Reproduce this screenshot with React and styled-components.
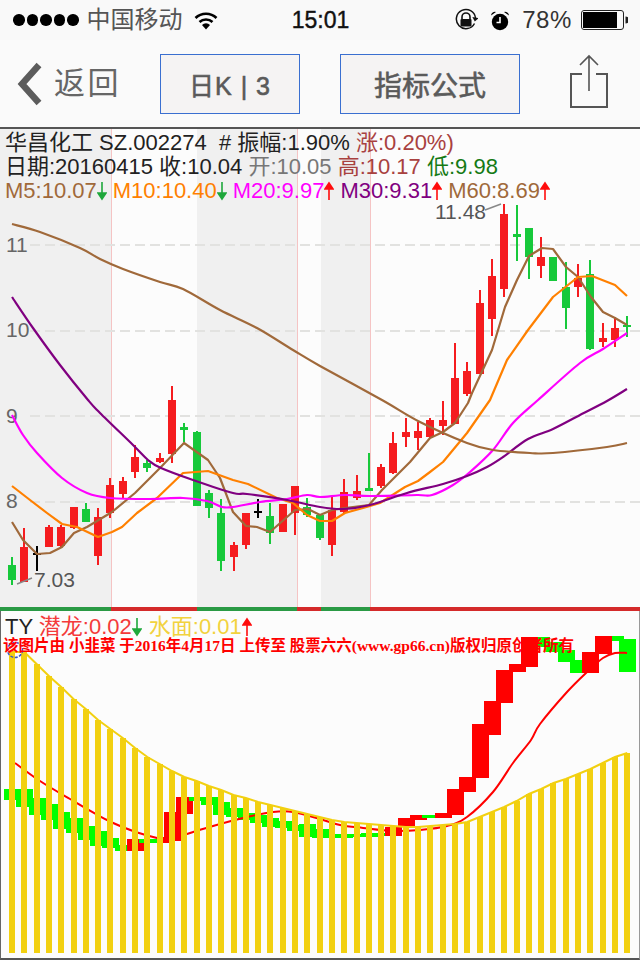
import React from 'react';
import styled, { createGlobalStyle } from 'styled-components';

const GlobalStyle = createGlobalStyle`
  html, body {
    margin: 0;
    padding: 0;
    background: #fcfcfc;
  }
`

// one candle: [top of wick, top of body, bottom of body, bottom of wick, colour]
const R = '#f51c1f';
const G = '#17c93b';
const K = '#000000';
const CANDLES = [
  [557, 565, 580, 585, G], [528, 547, 582, 582, R], [546, 553, 555, 571, K], [525, 527, 547, 547, R],
  [525, 527, 546, 547, R], [507, 507, 528, 529, R], [503, 509, 522, 522, G], [508, 517, 556, 565, R],
  [478, 485, 513, 518, R], [477, 481, 494, 498, R], [445, 457, 472, 478, R], [460, 463, 468, 472, G],
  [453, 458, 462, 463, R], [386, 400, 454, 463, R], [423, 427, 430, 442, G], [431, 432, 506, 506, G],
  [490, 493, 508, 518, G], [499, 513, 561, 571, G], [542, 545, 557, 571, R], [513, 513, 545, 549, R],
  [499, 511, 513, 518, K], [503, 516, 533, 544, G], [504, 504, 532, 532, R], [486, 486, 513, 535, R],
  [498, 507, 515, 517, G], [515, 515, 538, 540, G], [497, 510, 545, 556, R], [479, 492, 512, 513, R],
  [475, 491, 498, 500, R], [453, 488, 491, 491, G], [464, 467, 486, 488, R], [432, 443, 473, 474, R],
  [418, 432, 437, 447, R], [422, 431, 438, 450, R], [418, 420, 437, 438, R], [401, 420, 426, 435, R],
  [343, 378, 424, 424, R], [362, 371, 394, 396, R], [290, 303, 374, 374, R], [259, 276, 319, 336, R],
  [204, 214, 289, 297, R], [205, 234, 237, 261, G], [228, 228, 257, 279, G], [237, 257, 266, 278, R],
  [257, 257, 281, 281, G], [262, 287, 308, 329, G], [264, 278, 287, 297, R], [260, 274, 349, 350, G],
  [323, 338, 342, 347, R], [317, 328, 340, 347, R], [316, 325, 327, 337, G],
];

const MA_LINES = [
  {
    color: '#a0693a',
    smooth: false,
    points: '12,522 23,540 37,554 50,553 62,547 74,533 87,527 112,512 135,493 160,468 184,443 208,460 220,478 233,512 246,526 257,527 270,532 295,510 308,509 320,515 332,510 345,508 369,505 382,490 410,462 430,438 443,432 455,423 468,403 472,393 492,350 505,307 517,280 529,256 542,248 553,249 566,267 578,277 591,297 603,312 615,318 627,325',
  },
  {
    color: '#ff8000',
    smooth: false,
    points: '12,486 30,500 47,513 62,524 77,527 98,537 112,532 122,527 137,513 157,498 183,473 208,471 233,480 248,484 277,498 293,503 307,515 320,521 332,521 345,513 370,506 380,503 405,487 418,481 430,472 443,462 467,433 490,400 507,360 528,330 553,297 578,277 592,276 615,285 627,296',
  },
  {
    color: '#ff00ff',
    smooth: true,
    points: '12,415 23,435 37,453 62,478 87,493 110,498 150,499 183,498 207,501 222,507 233,507 260,502 287,499 307,495 320,497 345,495 370,496 417,495 432,495 453,485 470,472 493,450 513,423 538,400 580,363 603,349 627,333',
  },
  {
    color: '#800080',
    smooth: true,
    points: '12,297 33,328 60,365 88,400 100,413 133,445 148,460 161,468 193,480 233,493 247,494 287,500 320,507 343,509 370,505 407,493 443,484 467,476 487,467 503,457 528,439 553,429 580,415 607,401 627,389',
  },
  {
    color: '#a0693a',
    smooth: true,
    points: '12,224 40,232 80,248 100,259 123,269 160,282 183,289 220,310 257,328 293,350 320,366 382,400 420,422 467,443 493,450 530,453 553,453 607,447 627,443',
  },
];

// the trend of the period, drawn as shading in the chart and as the strip under it
const TRENDS = [
  { width: 111, up: false },
  { width: 86, up: true },
  { width: 100, up: false },
  { width: 24, up: true },
  { width: 49, up: false },
  { width: 270, up: true },
];

const GRID_LINES = [245, 331, 416, 502];
const AXIS_LABELS = [['11', 252], ['10', 337], ['9', 423], ['8', 508]];

const BAR_TOPS = [
  652, 652, 664, 676, 687, 699, 709, 720, 729, 738, 748, 757, 764, 771, 777, 781, 786, 790, 795, 798,
  802, 805, 808, 811, 814, 817, 820, 822, 823, 824, 825, 826, 827, 827, 826, 825, 824, 822, 817, 812,
  807, 801, 794, 789, 783, 779, 774, 769, 763, 757, 753,
];

const BG = '#00ff00';
const BR = '#ff0000';
// index on the time axis, top, bottom, colour
const BOXES = [
  [0, 789, 800, BG], [1, 789, 807, BG], [2, 798, 815, BG], [3, 804, 820, BG], [4, 812, 829, BG],
  [5, 818, 833, BG], [6, 826, 840, BG], [7, 831, 846, BG], [8, 838, 848, BG], [9, 845, 851, BG],
  [10, 839, 851, BR], [11, 839, 843, BG], [12, 839, 843, BG], [12.5, 837, 843, BR], [13, 812, 841, BR],
  [14, 797, 814, BR], [15, 797, 801, BG], [16, 797, 805, BG], [17, 802, 815, BG], [18, 808, 817, BG],
  [19, 813, 820, BG], [20, 815, 823, BG], [21, 818, 827, BG], [22, 821, 828, BG], [23, 825, 831, BG],
  [24, 824, 837, BG], [25, 829, 838, BG], [26, 834, 838, BG], [27, 834, 838, BG], [28, 834, 837, BG],
  [29, 833, 837, BG], [30, 833, 836, BG], [31, 827, 836, BR], [32, 818, 827, BR], [33, 815, 820, BR],
  [34, 815, 818, BG], [35, 813, 818, BR], [36, 789, 815, BR], [37, 777, 792, BR], [38, 724, 778, BR],
  [39, 701, 735, BR], [40, 670, 703, BR], [41, 664, 672, BR], [43, 637, 647, BG], [42, 637, 667, BR],
  [44, 642, 652, BG], [45, 650, 662, BG], [46, 660, 673, BG], [49, 636, 641, BG], [50, 639, 672, BG],
  [47, 652, 673, BR], [48, 636, 654, BR],
];

const SLOW_LINE = '15,763 40,781 70,799 107,820 133,831 157,838 170,840 187,834 213,826 247,817 273,812 293,812 320,819 340,825 363,828 393,831 420,830 447,826 467,817 493,792 513,763 531,740 540,724 567,692 587,672 603,658 615,653 627,653';

const slotX = (i) => 12 + 12.306 * i;

// turns "x,y x,y" into a path; the slow averages get rounded corners
const linePath = (points, smooth) => {
  const pts = points.split(' ').map((p) => p.split(',').map(Number));
  if (!smooth) return `M${pts.map((p) => p.join(' ')).join('L')}`;
  let d = `M${pts[0].join(' ')}`;
  for (let i = 0; i < pts.length - 1; i += 1) {
    const p0 = pts[i - 1] || pts[i];
    const p1 = pts[i];
    const p2 = pts[i + 1];
    const p3 = pts[i + 2] || p2;
    const c1 = [p1[0] + (p2[0] - p0[0]) / 6, p1[1] + (p2[1] - p0[1]) / 6];
    const c2 = [p2[0] - (p3[0] - p1[0]) / 6, p2[1] - (p3[1] - p1[1]) / 6];
    d += `C${c1.join(' ')} ${c2.join(' ')} ${p2.join(' ')}`;
  }
  return d;
};

const Page = styled.div`
  width: 640px;
  height: 960px;
  display: flex;
  flex-direction: column;
  background: #fcfcfc;
  font-family: "Liberation Sans", "Noto Sans CJK SC", sans-serif;
  overflow: hidden;
`
const StatusBar = styled.div`
  height: 40px;
  flex: none;
  display: grid;
  grid-template-columns: 1fr auto 1fr;
  align-items: center;
  padding: 0 12px 0 13px;
  background: #f9f9f9;
`
const StatusLeft = styled.div`
  display: flex;
  align-items: center;
`
const StatusRight = styled.div`
  display: flex;
  align-items: center;
  justify-content: flex-end;
`
const Signal = styled.div`
  display: flex;
  gap: 2px;
  margin-right: 8px;
`
const SignalDot = styled.span`
  width: 11.5px;
  height: 11.5px;
  border-radius: 50%;
  background: #000;
`
const Carrier = styled.span`
  font-size: 24px;
  line-height: 28px;
  color: #555;
  margin-right: 11px;
`
const Clock = styled.span`
  font-size: 23px;
  color: #111;
  font-weight: 400;
  -webkit-text-stroke: 0.4px #111;
`
const StatusIcon = styled.svg`
  display: block;
  margin-right: ${(p) => p.$gap || 0}px;
`
const Percent = styled.span`
  font-size: 24px;
  color: #333;
  letter-spacing: 0.6px;
  margin-right: 9px;
`
const NavBar = styled.div`
  height: 89px;
  box-sizing: border-box;
  flex: none;
  display: flex;
  align-items: center;
  padding: 0 0 0 17px;
  background: #fafafa;
  border-bottom: 2px solid #555;
`
const BackLink = styled.div`
  width: 143px;
  display: flex;
  align-items: center;
  gap: 11px;
`
const BackText = styled.span`
  font-size: 31px;
  line-height: 40px;
  letter-spacing: 2.5px;
  color: #666;
`
const NavButton = styled.div`
  width: ${(p) => p.$width}px;
  height: 60px;
  box-sizing: border-box;
  margin-right: ${(p) => p.$after}px;
  display: flex;
  align-items: center;
  justify-content: center;
  background: #f5f3f3;
  border: 1px solid #3a6fd0;
  font-size: ${(p) => p.$size}px;
  color: #5a5a5a;
  -webkit-text-stroke: 0.6px #5a5a5a;
  letter-spacing: ${(p) => p.$spacing || 0}px;
`
const ShareGlyph = styled.svg`
  display: block;
  margin-bottom: 6px;
`
const ChartPanel = styled.div`
  position: relative;
  height: 478px;
  flex: none;
`
const ChartCanvas = styled.svg`
  position: absolute;
  top: 0;
  left: 0;
  display: block;
`
const AxisText = styled.text`
  font-family: "Liberation Sans", sans-serif;
  font-size: 21px;
  fill: #666;
`
const PeakText = styled.text`
  font-family: "Liberation Sans", sans-serif;
  font-size: 21px;
  fill: #555;
`
const Info = styled.div`
  position: relative;
  padding: 2px 0 0 5px;
  font-size: 22px;
  line-height: 24px;
  color: #222;
`
const InfoLine = styled.div`
  display: flex;
  align-items: center;
  height: 24px;
  white-space: pre;
`
const Value = styled.span`
  color: ${(p) => p.$color};
  margin-right: ${(p) => p.$gap || 0}px;
`
const ArrowIcon = styled.svg`
  display: block;
  flex: none;
  margin-right: ${(p) => p.$gap || 0}px;
`
const TrendStrip = styled.div`
  height: 4px;
  flex: none;
  display: flex;
`
const TrendPiece = styled.div`
  width: ${(p) => p.$width}px;
  background: ${(p) => (p.$up ? '#d42a2a' : '#2a9a45')};
`
const IndicatorPanel = styled.div`
  position: relative;
  height: 349px;
  flex: none;
  box-sizing: border-box;
  border-left: 1px solid #666;
  border-right: 1px solid #999;
  border-bottom: 2px solid #555;
`
const IndicatorCanvas = styled.svg`
  position: absolute;
  top: 0;
  left: -1px;
  display: block;
`
const IndicatorTitle = styled.div`
  position: relative;
  display: flex;
  align-items: center;
  height: 22px;
  padding: 5px 0 0 4px;
  font-size: 22px;
  line-height: 22px;
  color: #222;
  white-space: pre;
`
const Watermark = styled.div`
  position: absolute;
  top: 27px;
  left: 2px;
  font-family: "Liberation Serif", "Noto Sans CJK SC", serif;
  font-size: 15.5px;
  line-height: 16px;
  font-weight: 700;
  color: #ff0000;
  white-space: pre;
`

const Arrow = ({ up, gap }) => (
  <ArrowIcon width="10" height="20" viewBox="0 0 10 20" $gap={gap}>
    {up ? (
      <path d="M5 19V5M1 8l4-6 4 6z" stroke="#ff0d0d" strokeWidth="1.6" fill="#ff0d0d" />
    ) : (
      <path d="M5 1v14M1 12l4 6 4-6z" stroke="#1fa83c" strokeWidth="1.6" fill="#1fa83c" />
    )}
  </ArrowIcon>
);

const WifiIcon = () => (
  <StatusIcon width="24" height="19" viewBox="0 0 24 19">
    <path d="M1.5 7a15 15 0 0 1 21 0" fill="none" stroke="#000" strokeWidth="2.6" />
    <path d="M5.5 11a9.5 9.5 0 0 1 13 0" fill="none" stroke="#000" strokeWidth="2.6" />
    <path d="M8 14a5.5 5.5 0 0 1 8 0l-4 4.5z" fill="#000" />
  </StatusIcon>
);

const RotationLockIcon = () => (
  <StatusIcon width="24" height="24" viewBox="0 0 24 24" $gap={12}>
    <path d="M20.5 15.5A9.6 9.6 0 1 1 21.5 10" fill="none" stroke="#111" strokeWidth="1.5" />
    <path d="M18 9.5h6.5l-3.2 4z" fill="#111" transform="rotate(12 21 11)" />
    <path d="M8 11V9a4 4 0 0 1 8 0v2" fill="none" stroke="#111" strokeWidth="1.6" />
    <rect x="6.5" y="11" width="11" height="7.5" rx="1" fill="#111" />
  </StatusIcon>
);

const AlarmIcon = () => (
  <StatusIcon width="20" height="21" viewBox="0 0 20 21" $gap={12}>
    <circle cx="10" cy="12" r="8.2" fill="#000" />
    <path d="M10 7v5.5h-3.5" fill="none" stroke="#fff" strokeWidth="1.6" />
    <path d="M1 5.5a4 4 0 0 1 5-3.5zM19 5.5a4 4 0 0 0-5-3.5z" fill="#000" />
  </StatusIcon>
);

const BatteryIcon = () => (
  <StatusIcon width="47" height="20" viewBox="0 0 47 20">
    <rect x="0.5" y="0.5" width="42" height="19" rx="2.5" fill="none" stroke="#222" />
    <rect x="2" y="2" width="34" height="16" fill="#000" />
    <path d="M44.5 6.5a3.5 3.5 0 0 1 0 7z" fill="#222" />
  </StatusIcon>
);

const ShareIcon = () => (
  <ShareGlyph width="40" height="54" viewBox="0 0 40 54">
    <path d="M13 20H2v33h36V20H27" fill="none" stroke="#555" strokeWidth="2" />
    <path d="M20 37V2M11 11l9-9 9 9" fill="none" stroke="#555" strokeWidth="1.6" />
  </ShareGlyph>
);

const ChevronIcon = () => (
  <svg width="26" height="44" viewBox="0 0 26 44">
    <path d="M22 3L5 22l17 19" fill="none" stroke="#5c5c5c" strokeWidth="6.5" />
  </svg>
);

const KLineChart = () => {
  let left = 0;
  return (
    <ChartCanvas width="640" height="478" viewBox="0 129 640 478">
      {TRENDS.map((t) => {
        const x = left;
        left += t.width;
        return (
          <g key={x}>
            <rect x={x} y="129" width={t.width} height="478" fill={t.up ? '#fcfcfc' : '#f0f0f0'} />
            {t.up && <rect x={x} y="129" width="1" height="478" fill="#f5c4c4" />}
          </g>
        );
      })}
      {GRID_LINES.map((y) => (
        <line key={y} x1="30" x2="640" y1={y} y2={y} stroke="#e2e2e0" strokeWidth="2" strokeDasharray="10 5" />
      ))}
      {AXIS_LABELS.map(([label, y]) => (
        <AxisText key={label} x="6" y={y}>{label}</AxisText>
      ))}
      {CANDLES.map(([high, top, bottom, low, color], i) => {
        const cx = Math.round(slotX(i));
        return (
          <g key={i} fill={color}>
            <rect x={cx - 1} y={high} width="2" height={low - high} />
            <rect x={cx - 4} y={top} width="8" height={bottom - top} />
          </g>
        );
      })}
      {MA_LINES.map((line, i) => (
        <path key={i} d={linePath(line.points, line.smooth)} fill="none" stroke={line.color} strokeWidth="2.2" strokeLinejoin="round" />
      ))}
      <PeakText x="435" y="219">11.48</PeakText>
      <line x1="485" y1="210" x2="501" y2="204" stroke="#888" strokeWidth="1.5" />
      <PeakText x="34" y="587">7.03</PeakText>
      <line x1="17" y1="584" x2="32" y2="578" stroke="#888" strokeWidth="1.5" />
    </ChartCanvas>
  );
};

const IndicatorChart = () => {
  const tops = BAR_TOPS.map((y, i) => `${slotX(i).toFixed(1)},${y}`).join(' ');
  return (
    <IndicatorCanvas width="640" height="349" viewBox="0 611 640 349">
      {BOXES.map(([i, top, bottom, color]) => (
        <rect key={i} x={Math.round(slotX(i)) - 8} y={top} width="17" height={bottom - top} fill={color} />
      ))}
      <path d={linePath(SLOW_LINE, true)} fill="none" stroke="#ff0000" strokeWidth="2" strokeLinejoin="round" />
      {BAR_TOPS.map((y, i) => (
        <rect key={i} x={Math.round(slotX(i)) - 3} y={y} width="6" height={953 - y} fill="#f2d010" />
      ))}
      <polyline points={tops} fill="none" stroke="#f2d010" strokeWidth="2" />
      <circle cx="15" cy="650" r="7.5" fill="none" stroke="#3355cc" strokeWidth="1.5" strokeDasharray="3 1.5" />
    </IndicatorCanvas>
  );
};

const App = () => (
  <Page>
    <GlobalStyle />
    <StatusBar>
      <StatusLeft>
        <Signal>
          {[0, 1, 2, 3, 4].map((n) => <SignalDot key={n} />)}
        </Signal>
        <Carrier>中国移动</Carrier>
        <WifiIcon />
      </StatusLeft>
      <Clock>15:01</Clock>
      <StatusRight>
        <RotationLockIcon />
        <AlarmIcon />
        <Percent>78%</Percent>
        <BatteryIcon />
      </StatusRight>
    </StatusBar>
    <NavBar>
      <BackLink>
        <ChevronIcon />
        <BackText>返回</BackText>
      </BackLink>
      <NavButton $width={140} $after={40} $size={25} $spacing={1}>日K | 3</NavButton>
      <NavButton $width={180} $after={49} $size={28}>指标公式</NavButton>
      <ShareIcon />
    </NavBar>
    <ChartPanel>
      <KLineChart />
      <Info>
        <InfoLine>华昌化工 SZ.002274  # 振幅:1.90% <Value $color="#a8413f">涨:0.20%)</Value></InfoLine>
        <InfoLine>
          日期:20160415 收:10.04 <Value $color="#777">开:10.05 </Value>
          <Value $color="#a8413f">高:10.17 </Value><Value $color="#157a15">低:9.98</Value>
        </InfoLine>
        <InfoLine>
          <Value $color="#a0693a">M5:10.07</Value><Arrow gap={6} />
          <Value $color="#ff8000">M10:10.40</Value><Arrow gap={6} />
          <Value $color="#ff00ff">M20:9.97</Value><Arrow up gap={6} />
          <Value $color="#800080">M30:9.31</Value><Arrow up gap={6} />
          <Value $color="#a0693a">M60:8.69</Value><Arrow up />
        </InfoLine>
      </Info>
    </ChartPanel>
    <TrendStrip>
      {TRENDS.map((t, i) => <TrendPiece key={i} $width={t.width} $up={t.up} />)}
    </TrendStrip>
    <IndicatorPanel>
      <IndicatorChart />
      <IndicatorTitle>
        TY <Value $color="#f43a3a">潜龙:0.02</Value><Arrow gap={7} />
        <Value $color="#f2d23e">水面:0.01</Value><Arrow up />
      </IndicatorTitle>
      <Watermark>该图片由 小韭菜 于2016年4月17日 上传至 股票六六(www.gp66.cn)版权归原创者所有</Watermark>
    </IndicatorPanel>
  </Page>
);

export default App;
